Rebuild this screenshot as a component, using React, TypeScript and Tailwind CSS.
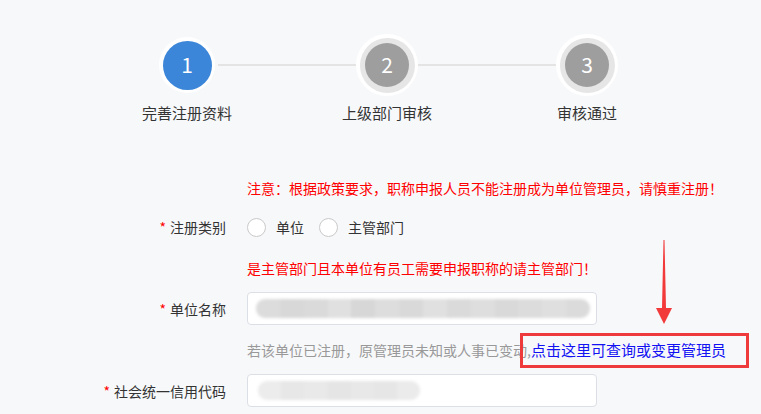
import React from "react";

const STEPS = ["完善注册资料", "上级部门审核", "审核通过"];

const NAME_STRIPS = ["#dcdcdc", "#d8d8d8", "#dadada", "#e0e0e0", "#d7d7d7", "#dddddd", "#d9d9d9", "#e0e0e0", "#dadada", "#dedede", "#d9d9d9", "#dcdcdc", "#dfdfdf", "#dbdbdb"];
const CODE_STRIPS = ["#ececec", "#e7e7e7", "#e9e9e9", "#e5e5e5", "#e8e8e8", "#e6e6e6", "#ebebeb"];

function StepDot({ n, active }: { n: number; active?: boolean }) {
  if (active) {
    return (
      <div className="flex h-[62px] w-[62px] items-center justify-center">
        <div className="flex h-[56px] w-[56px] items-center justify-center rounded-full bg-white">
          <div className="flex h-[49px] w-[49px] items-center justify-center rounded-full bg-[#3b86d9] text-[21px] text-white">
            {n}
          </div>
        </div>
      </div>
    );
  }
  return (
    <div className="flex h-[62px] w-[62px] items-center justify-center rounded-full bg-white">
      <div className="flex h-[55px] w-[55px] items-center justify-center rounded-full bg-[#e6e6e6]">
        <div className="flex h-[44px] w-[44px] items-center justify-center rounded-full bg-[#9e9e9e] text-[21px] text-white">
          {n}
        </div>
      </div>
    </div>
  );
}

function Label({ text }: { text: string }) {
  return (
    <div className="w-[226px] shrink-0 text-right text-[14px] leading-[20px] text-[#333]">
      <span className="mr-[4px] text-[#f00]">*</span>
      {text}
    </div>
  );
}

function Radio({ label }: { label: string }) {
  return (
    <div className="flex items-center">
      <span className="h-[19px] w-[19px] rounded-full border-[1.5px] border-[#c9c9c9] bg-white" />
      <span className="ml-[10px] text-[14px] leading-[20px] text-[#333]">{label}</span>
    </div>
  );
}

// mosaic-blurred field content
function Blurred({ strips, width }: { strips: string[]; width: number }) {
  return (
    <div className="flex h-[19px] overflow-hidden rounded-[9px] blur-[1.5px]" style={{ width }}>
      {strips.map((c, i) => (
        <div key={i} className="h-full flex-1" style={{ backgroundColor: c }} />
      ))}
    </div>
  );
}

export default function App() {
  return (
    <div className="relative h-[414px] w-full overflow-hidden bg-[#f7f8fa] font-['Noto_Sans_CJK_SC','Liberation_Sans',sans-serif]">
      {/* steps */}
      <div className="pt-[34px]">
        <div className="ml-[156px] flex w-[462px] items-center">
          <StepDot n={1} active />
          <div className="h-[2px] flex-1 bg-[#e4e4e4]" />
          <StepDot n={2} />
          <div className="h-[2px] flex-1 bg-[#e4e4e4]" />
          <StepDot n={3} />
        </div>
        <div className="ml-[87px] mt-[7px] flex">
          {STEPS.map((s) => (
            <div key={s} className="w-[200px] text-center text-[15px] leading-[20px] text-[#333]">
              {s}
            </div>
          ))}
        </div>
      </div>

      {/* form */}
      <div className="mt-[55px]">
        <div className="pl-[247px] text-[14px] leading-[20px] text-[#f00]">
          注意：根据政策要求，职称申报人员不能注册成为单位管理员，请慎重注册！
        </div>

        <div className="mt-[19px] flex items-center">
          <Label text="注册类别" />
          <div className="ml-[21px] flex items-center gap-[15px]">
            <Radio label="单位" />
            <Radio label="主管部门" />
          </div>
        </div>

        <div className="mt-[21px] pl-[247px] text-[14px] leading-[20px] text-[#f00]">
          是主管部门且本单位有员工需要申报职称的请主管部门！
        </div>

        <div className="mt-[14px] flex items-center">
          <Label text="单位名称" />
          <div className="ml-[21px] flex h-[33px] w-[350px] items-center rounded-[4px] border border-[#dcdfe6] bg-white pl-[8px]">
            <Blurred strips={NAME_STRIPS} width={334} />
          </div>
        </div>

        <div className="mt-[15px] pl-[247px] text-[14px] leading-[20px] text-[#999]">
          若该单位已注册，原管理员未知或人事已变动,
          <span className="text-[15px] text-[#1212f2]">点击这里可查询或变更管理员</span>
        </div>

        <div className="mt-[14px] flex items-center">
          <Label text="社会统一信用代码" />
          <div className="ml-[21px] flex h-[33px] w-[350px] items-center rounded-[4px] border border-[#dcdfe6] bg-white pl-[10px]">
            <Blurred strips={CODE_STRIPS} width={162} />
          </div>
        </div>
      </div>

      {/* annotation overlay */}
      <div className="absolute left-[520px] top-[333px] h-[35px] w-[229px] border-[3px] border-[#ee3a3a]" />
      <svg className="absolute left-[654px] top-[238px]" width="20" height="88" viewBox="0 0 20 88">
        <polygon points="9.5,2 10.5,2 12,70 18,70 10,86 2,70 8,70" fill="#f23a3a" />
      </svg>
    </div>
  );
}
